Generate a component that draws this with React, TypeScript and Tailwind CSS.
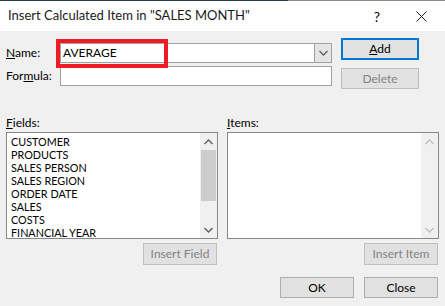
import { ReactNode } from "react";

const FIELDS = [
  "CUSTOMER",
  "PRODUCTS",
  "SALES PERSON",
  "SALES REGION",
  "ORDER DATE",
  "SALES",
  "COSTS",
  "FINANCIAL YEAR",
];

function Chevron({ up, color }: { up?: boolean; color: string }) {
  return (
    <svg width="9" height="6" viewBox="0 0 9 6" className="block">
      <path
        d={up ? "M0.5 5 L4.5 1 L8.5 5" : "M0.5 1 L4.5 5 L8.5 1"}
        fill="none"
        stroke={color}
        strokeWidth="1.4"
      />
    </svg>
  );
}

function Btn({
  children,
  disabled,
  focused,
  className = "",
}: {
  children: ReactNode;
  disabled?: boolean;
  focused?: boolean;
  className?: string;
}) {
  const border = focused
    ? "border-2 border-[#0078d7]"
    : disabled
      ? "border border-[#bfbfbf]"
      : "border border-[#adadad]";
  return (
    <div
      className={`flex items-center justify-center bg-[#e1e1e1] ${border} ${
        disabled ? "text-[#838383]" : "text-black"
      } ${className}`}
    >
      {children}
    </div>
  );
}

function ScrollBar({ enabled }: { enabled: boolean }) {
  const arrow = enabled ? "#606060" : "#c0c0c0";
  return (
    <div className="w-[17px] flex flex-col bg-[#f0f0f0]">
      <div className="h-[17px] flex items-center justify-center">
        <Chevron up color={arrow} />
      </div>
      <div className="flex-1 flex flex-col">
        {enabled && <div className="h-[51px] mx-[1px] bg-[#cdcdcd]" />}
      </div>
      <div className="h-[17px] flex items-center justify-center">
        <Chevron color={arrow} />
      </div>
    </div>
  );
}

export default function App() {
  return (
    <div
      className="w-[445px] h-[306px] bg-[#f0f0f0] text-[12px] text-black overflow-hidden relative"
      style={{ fontFamily: '"Segoe UI", Lato, sans-serif' }}
    >
      {/* title bar */}
      <div className="flex">
        <div className="w-[288px] h-px bg-[#2b3a48]" />
        <div className="flex-1 h-px bg-[#8a8a8a]" />
      </div>
      <div className="h-[30px] bg-white flex items-center pl-[8px]">
        <span className="text-[13px] text-[#1a1a1a]">
          Insert Calculated Item in "SALES MONTH"
        </span>
        <span className="ml-auto text-[14px] mr-[36px]">?</span>
        <svg width="11" height="11" viewBox="0 0 11 11" className="mr-[18px]">
          <path d="M0.5 0.5 L10.5 10.5 M10.5 0.5 L0.5 10.5" stroke="#1a1a1a" strokeWidth="1" />
        </svg>
      </div>

      {/* name / formula */}
      <div className="flex pl-[6px] pt-[7px]">
        <div className="w-[326px] flex flex-col gap-[3px] pt-[5px]">
          <div className="flex items-center h-[20px]">
            <span className="w-[54px]">
              <span className="underline">N</span>ame:
            </span>
            <div className="flex-1 h-[20px] flex bg-white border border-[#a0a0a0]">
              <span className="pl-[2px] leading-[18px]">AVERAGE</span>
              <div className="ml-auto w-[17px] h-full bg-[#e5e5e5] border-l border-[#a0a0a0] flex items-center justify-center">
                <Chevron color="#606060" />
              </div>
            </div>
          </div>
          <div className="flex items-center h-[20px]">
            <span className="w-[54px]">
              For<span className="underline">m</span>ula:
            </span>
            <div className="flex-1 h-[20px] bg-white border border-[#a0a0a0]" />
          </div>
        </div>
        <div className="ml-[9px] flex flex-col gap-[8px]">
          <Btn focused className="w-[78px] h-[22px]">
            <span>
              <span className="underline">A</span>dd
            </span>
          </Btn>
          <Btn disabled className="w-[78px] h-[21px]">
            Delete
          </Btn>
        </div>
      </div>

      {/* lists */}
      <div className="flex pl-[6px] pr-[6px] mt-[27px] gap-[9px]">
        <div className="w-[212px] flex flex-col">
          <span className="leading-[14px] mb-[2px]">
            <span className="underline">F</span>ields:
          </span>
          <div className="h-[107px] bg-white border border-[#828790] flex">
            <div className="flex-1 pl-[4px] pt-[2px] text-[10.8px]">
              {FIELDS.map((f) => (
                <div key={f} className="leading-[13px] h-[13px]">
                  {f}
                </div>
              ))}
            </div>
            <ScrollBar enabled />
          </div>
          <Btn disabled className="self-end mr-[1px] mt-[4px] w-[74px] h-[22px]">
            Insert Field
          </Btn>
        </div>
        <div className="w-[212px] flex flex-col">
          <span className="leading-[14px] mb-[2px]">
            <span className="underline">I</span>tems:
          </span>
          <div className="h-[107px] bg-white border border-[#828790] flex">
            <div className="flex-1" />
            <ScrollBar enabled={false} />
          </div>
          <Btn disabled className="self-end mr-[1px] mt-[4px] w-[74px] h-[22px]">
            Insert Item
          </Btn>
        </div>
      </div>

      {/* footer */}
      <div className="flex justify-end gap-[10px] pr-[7px] mt-[12px]">
        <Btn className="w-[74px] h-[21px]">OK</Btn>
        <Btn className="w-[74px] h-[21px]">Close</Btn>
      </div>

      {/* annotation */}
      <div className="absolute left-[56px] top-[39px] w-[112px] h-[29px] border-[4px] border-[#ed1c24]" />
    </div>
  );
}
